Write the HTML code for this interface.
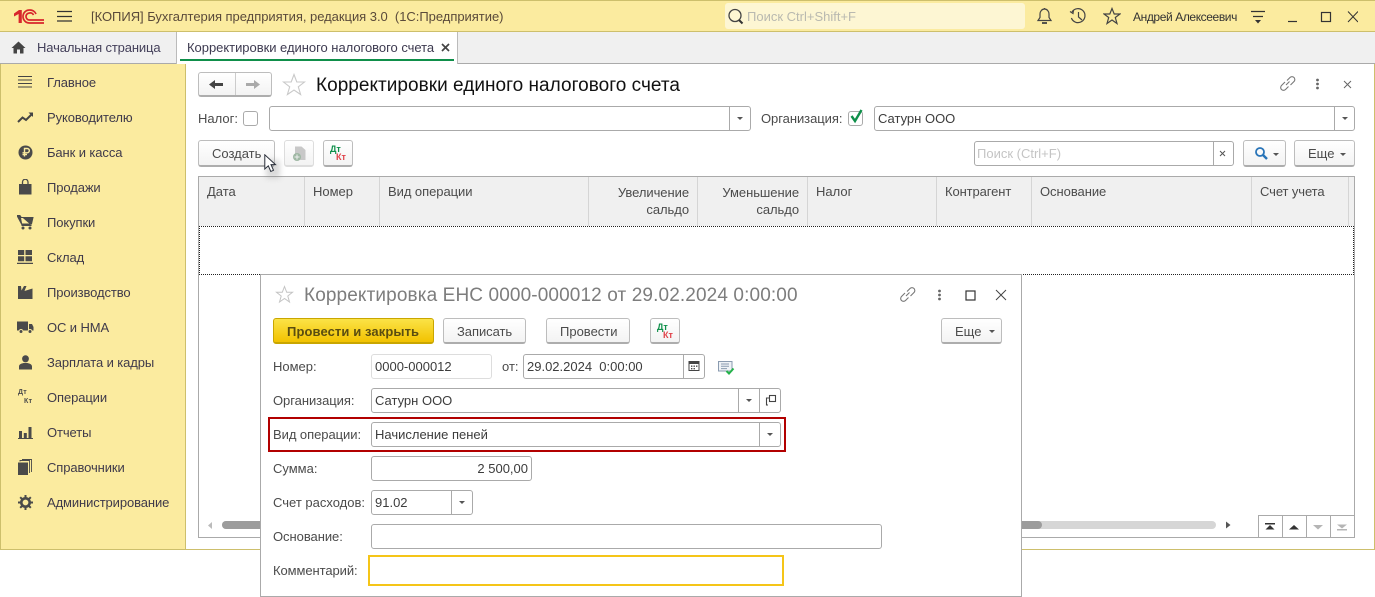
<!DOCTYPE html>
<html><head><meta charset="utf-8"><style>
html,body{margin:0;padding:0;background:#fff}
#p{position:relative;width:1375px;height:597px;overflow:hidden;font:13px/16px "Liberation Sans",Arial,sans-serif;color:#4b4b4b;background:#fff}
#p div,#p span,#p svg{position:absolute}
.t{white-space:nowrap;letter-spacing:0}
.m{color:#3f3a4a;left:47px;letter-spacing:-.1px}
.b{background:linear-gradient(#fff,#f3f3f3);border:1px solid #bdbdbd;border-bottom:2px solid #adadad;border-radius:3px;box-sizing:border-box}
.i{background:#fff;border:1px solid #aaa;border-radius:3px;box-sizing:border-box}
.d{width:1px;background:#aaa;top:0;bottom:0}
.a{width:0;height:0;border-left:3px solid transparent;border-right:3px solid transparent;border-top:3px solid #555}
.h{top:177px;height:49px;width:1px;background:#d5d5d5}
.c{color:#3c3c3c}
</style></head><body><div id="p">
<div style="left:0;top:0;width:1375px;height:32px;background:#fbeb9f;border-top:1px solid #cdbf6c;border-bottom:1px solid #cdbf6c;box-sizing:border-box"></div>
<svg style="left:14px;top:9px" width="30" height="15" viewBox="0 0 30 15"><path d="M0 4.5L5 1H7.8V14H4.6V5L0 7.5Z" fill="#d8262c"/><g fill="none" stroke="#d8262c" stroke-width="1.7"><path d="M22 5A6.5 6.5 0 0 0 15.5 1A6.5 6.5 0 0 0 15.5 14H30"/><path d="M19.5 6A3.5 3.5 0 0 0 15.5 4A3.5 3.5 0 0 0 15.5 11H30"/></g></svg>
<svg style="left:57px;top:10px" width="15" height="12"><path d="M0 1.5H15M0 6.5H15M0 11H15" stroke="#333" stroke-width="1.2"/></svg>
<span class="t" style="left:91px;top:9px;color:#5a4a3a;letter-spacing:-.03px">[КОПИЯ] Бухгалтерия предприятия, редакция 3.0&nbsp; (1С:Предприятие)</span>
<div style="left:725px;top:3px;width:300px;height:26px;background:#fdf6d3;border-radius:3px"></div>
<svg style="left:727px;top:8px" width="18" height="18"><circle cx="8" cy="7.5" r="6" fill="none" stroke="#444" stroke-width="1.3"/><path d="M12 12l3.5 3.5" stroke="#333" stroke-width="2"/></svg>
<span class="t" style="left:747px;top:9px;color:#b9b9b0">Поиск Ctrl+Shift+F</span>
<svg style="left:1036px;top:7px" width="17" height="18" fill="none" stroke="#444" stroke-width="1.2"><path d="M2 13.5H15L13 10.5V7A4.5 5 0 0 0 4 7V10.5Z"/><path d="M6 16H11" stroke-width="1.8"/><path d="M8.5 1v1.5"/></svg>
<svg style="left:1069px;top:7px" width="19" height="19" fill="none" stroke="#444" stroke-width="1.2"><path d="M3 5A7 7 0 1 1 2.4 11"/><path d="M1 4.5L4 6.5 4.5 3"/><path d="M9.5 5V10L13 13"/></svg>
<svg style="left:1103px;top:7px" width="18" height="18" fill="none" stroke="#444" stroke-width="1.2"><path d="M9 1.5L11.2 7H17L12.3 10.5 14 16.5 9 13 4 16.5 5.7 10.5 1 7H6.8Z"/></svg>
<span class="t" style="left:1133px;top:9px;font-size:12px;color:#333;letter-spacing:-.4px">Андрей Алексеевич</span>
<svg style="left:1250px;top:10px" width="16" height="15"><path d="M1 1.5H15M3 6.5H13" stroke="#333" stroke-width="1.2"/><path d="M5 10H11L8 13.5Z" fill="#333"/></svg>
<svg style="left:1288px;top:10px" width="70" height="13" fill="none" stroke="#333" stroke-width="1.2"><path d="M0 11.5H9"/><rect x="33.5" y="2.5" width="9" height="9"/><path d="M60 1.5L70 12M70 1.5L60 12" stroke-width="1"/></svg>

<div style="left:0;top:32px;width:1375px;height:32px;background:#f0f0f0;border-bottom:1px solid #aaa;box-sizing:border-box"></div>
<svg style="left:11px;top:41px" width="15" height="13"><path d="M7.5 0.5L14.5 7H12.5V12.5H9V8.5H6V12.5H2.5V7H.5Z" fill="#444"/></svg>
<span class="t" style="left:37px;top:40px;color:#44405a;letter-spacing:-.13px">Начальная страница</span>
<div style="left:176px;top:32px;width:282px;height:32px;background:#fff;border-left:1px solid #bbb;border-right:1px solid #bbb;box-sizing:border-box"></div>
<div style="left:180px;top:59px;width:274px;height:2px;background:#0f8f4a"></div>
<span class="t" style="left:187px;top:40px;color:#3d3a50;letter-spacing:-.03px">Корректировки единого налогового счета</span>
<svg style="left:441px;top:43px" width="9" height="9"><path d="M1 1L8 8M8 1L1 8" stroke="#444" stroke-width="1.7"/></svg>

<div style="left:0;top:64px;width:186px;height:486px;background:#fbeb9f;border-left:1px solid #cdbf6c;border-right:1px solid #cdbf6c;box-sizing:border-box"></div>
<div style="left:186px;top:549px;width:1189px;height:1px;background:#cdbf6c"></div>
<div style="left:0;top:549px;width:186px;height:1px;background:#cdbf6c"></div>
<div style="left:1374px;top:64px;width:1px;height:486px;background:#cdbf6c"></div>

<svg style="left:17px;top:75px" width="16" height="15" stroke="#444" stroke-width="1"><path d="M1 1.5H15M1 5H15M1 8.5H15M1 12H15"/></svg>
<span class="t m" style="top:75px">Главное</span>
<svg style="left:17px;top:111px" width="17" height="13" fill="none" stroke="#444" stroke-width="2"><path d="M1 11L5.5 6.5 9 9 15 3"/><path d="M11.5 1.5H16V6" fill="#444" stroke="none"/></svg>
<span class="t m" style="top:110px">Руководителю</span>
<svg style="left:18px;top:145px" width="15" height="15"><circle cx="7.5" cy="7.5" r="7" fill="#4a4a4a"/><path d="M6.5 11.5V3.5H9.2A2 2 0 0 1 9.2 7.8H4.5M4.5 9.6H9" fill="none" stroke="#fbeb9f" stroke-width="1.4"/></svg>
<span class="t m" style="top:145px">Банк и касса</span>
<svg style="left:19px;top:179px" width="13" height="16"><path d="M0 5H12.5V15.5H0Z" fill="#4a4a4a"/><path d="M3.5 6V3A2.7 2.7 0 0 1 9 3V6" fill="none" stroke="#4a4a4a" stroke-width="1.3"/></svg>
<span class="t m" style="top:180px">Продажи</span>
<svg style="left:17px;top:215px" width="17" height="15"><path d="M0 .5H3L4 2.5H16L14.5 9H4.5Z M3 .5L5 10.5H14.5" fill="#4a4a4a" stroke="#4a4a4a"/><circle cx="6" cy="13" r="1.5" fill="#4a4a4a"/><circle cx="13" cy="13" r="1.5" fill="#4a4a4a"/></svg>
<span class="t m" style="top:215px">Покупки</span>
<svg style="left:17px;top:250px" width="16" height="15" fill="#4a4a4a"><path d="M1 0h6.2v5H1zM8.5 0H15v5H8.5zM1 6.2h6.2v5H1zM8.5 6.2H15v5H8.5zM0 12.7h16V14H0z"/></svg>
<span class="t m" style="top:250px">Склад</span>
<svg style="left:18px;top:285px" width="15" height="15" fill="#4a4a4a"><path d="M0 14V1H3L3.5 5.5 6 1H8.5L6.5 6 14.5 3.5V14Z"/></svg>
<span class="t m" style="top:285px">Производство</span>
<svg style="left:17px;top:321px" width="17" height="13" fill="#4a4a4a"><path d="M0 .5H11V9.5H0Z"/><path d="M12 3H15L16.5 6V9.5H12Z"/><circle cx="4" cy="10.5" r="2" stroke="#fbeb9f"/><circle cx="13" cy="10.5" r="2" stroke="#fbeb9f"/></svg>
<span class="t m" style="top:320px">ОС и НМА</span>
<svg style="left:19px;top:355px" width="13" height="15" fill="#4a4a4a"><ellipse cx="6.5" cy="3.8" rx="3.4" ry="3.6"/><path d="M0 14.5V11.5C0 9 3 8.5 4.5 8H8.5C10 8.5 13 9 13 11.5V14.5Z"/></svg>
<span class="t m" style="top:355px">Зарплата и кадры</span>
<span style="left:18px;top:389px;font:bold 7px/8px 'Liberation Sans';color:#4a4a4a;letter-spacing:.3px">Дт</span>
<span style="left:24px;top:398px;font:bold 7px/8px 'Liberation Sans';color:#4a4a4a;letter-spacing:.3px">Кт</span>
<span class="t m" style="top:390px">Операции</span>
<svg style="left:18px;top:426px" width="15" height="13" fill="#4a4a4a"><path d="M1 5h3v7H1zM5.8 7h3v5h-3zM10.5 1h3v11h-3zM0 12h15v1H0z"/></svg>
<span class="t m" style="top:425px">Отчеты</span>
<svg style="left:18px;top:459px" width="15" height="16" fill="#4a4a4a"><path d="M0 3.5H10V16H0Z"/><path d="M2 2.5V1.5H11.5V14M4 .5H13.5V13" fill="none" stroke="#4a4a4a" stroke-width=".9"/></svg>
<span class="t m" style="top:460px">Справочники</span>
<svg style="left:18px;top:495px" width="15" height="15"><circle cx="7.5" cy="7.5" r="4.2" fill="none" stroke="#4a4a4a" stroke-width="2.6"/><path d="M7.5 0V15M0 7.5H15M2.2 2.2L12.8 12.8M12.8 2.2L2.2 12.8" stroke="#4a4a4a" stroke-width="2" stroke-dasharray="2.6 9.8"/></svg>
<span class="t m" style="top:495px">Администрирование</span>

<div class="b" style="left:198px;top:72px;width:74px;height:25px"></div>
<div style="left:235px;top:73px;width:1px;height:22px;background:#ccc"></div>
<svg style="left:209px;top:79px" width="16" height="11"><path d="M0 5.5L6 1V4H14V7H6V10Z" fill="#444"/></svg>
<svg style="left:245px;top:79px" width="16" height="11"><path d="M15 5.5L9 1V4H1V7H9V10Z" fill="#aaa"/></svg>
<svg style="left:282px;top:73px" width="24" height="24" fill="none" stroke="#c9c9c9" stroke-width="1.1"><path d="M12 1.5L14.8 9H22.5L16.3 13.8 18.6 21.5 12 17 5.4 21.5 7.7 13.8 1.5 9H9.2Z"/></svg>
<span class="t" style="left:316px;top:75px;font-size:19px;line-height:22px;color:#111;letter-spacing:.03px">Корректировки единого налогового счета</span>
<svg style="left:1279px;top:75px" width="17" height="17" fill="none" stroke="#777" stroke-width="1.1"><path d="M7 10L10.5 6.5"/><path d="M6 7L2.5 10.5A2.6 2.6 0 0 0 6.5 14.5L9.5 11.5"/><path d="M8 5.5L11 2.5A2.6 2.6 0 0 1 15 6.5L11.5 10"/></svg>
<svg style="left:1315px;top:78px" width="5" height="12" fill="#666"><circle cx="2.5" cy="2" r="1.4"/><circle cx="2.5" cy="6" r="1.4"/><circle cx="2.5" cy="10" r="1.4"/></svg>
<svg style="left:1343px;top:80px" width="9" height="9"><path d="M1 1L8 8M8 1L1 8" stroke="#666"/></svg>

<span class="t" style="left:198px;top:111px">Налог:</span>
<div class="i" style="left:243px;top:111px;width:15px;height:15px"></div>
<div class="i" style="left:269px;top:106px;width:482px;height:25px"><div class="d" style="right:20px"></div><div class="a" style="right:7px;top:10px"></div></div>
<span class="t" style="left:761px;top:111px;letter-spacing:-.05px">Организация:</span>
<div class="i" style="left:848px;top:111px;width:15px;height:15px"></div>
<svg style="left:849px;top:108px" width="15" height="16"><path d="M2.5 8L6 13 12.5 2" fill="none" stroke="#0f8f4a" stroke-width="2.4"/></svg>
<div class="i" style="left:874px;top:106px;width:481px;height:25px"><div class="d" style="right:19px"></div><div class="a" style="right:6px;top:10px"></div></div>
<span class="t c" style="left:878px;top:111px">Сатурн ООО</span>

<div class="b" style="left:198px;top:140px;width:77px;height:27px"></div>
<span class="t" style="left:212px;top:146px">Создать</span>
<div class="b" style="left:284px;top:140px;width:30px;height:27px;border-color:#ddd"></div>
<svg style="left:292px;top:146px" width="15" height="16"><path d="M3 .5H9.5L13.5 4V14H3Z" fill="#c8c8c8"/><circle cx="5" cy="11" r="4" fill="#9fb8a4"/><path d="M5 8.5V13.5M2.5 11H7.5" stroke="#eee"/></svg>
<div class="b" style="left:323px;top:140px;width:30px;height:27px"></div>
<span style="left:330px;top:145px;font:bold 9px/8px 'Liberation Sans';color:#0f8f4a">Дт</span>
<span style="left:336px;top:153px;font:bold 9px/8px 'Liberation Sans';color:#e0434a">Кт</span>

<div class="i" style="left:974px;top:141px;width:260px;height:25px"><div class="d" style="right:19px"></div></div>
<span class="t" style="left:977px;top:146px;color:#c4c4c4">Поиск (Ctrl+F)</span>
<svg style="left:1219px;top:150px" width="7" height="7"><path d="M1 1L6 6M6 1L1 6" stroke="#555"/></svg>
<div class="b" style="left:1243px;top:140px;width:43px;height:27px"></div>
<svg style="left:1254px;top:146px" width="15" height="15" fill="none" stroke="#2874b8" stroke-width="1.8"><circle cx="6" cy="6" r="4"/><path d="M9 9L13 13" stroke-width="2.4"/></svg>
<div class="a" style="left:1273px;top:153px"></div>
<div class="b" style="left:1294px;top:140px;width:61px;height:27px"></div>
<span class="t" style="left:1308px;top:146px">Еще</span>
<div class="a" style="left:1340px;top:153px"></div>

<div style="left:198px;top:176px;width:1157px;height:362px;border:1px solid #aaa;box-sizing:border-box"></div>
<div style="left:199px;top:177px;width:1155px;height:49px;background:#f0f0f0"></div>
<div class="h" style="left:304px"></div><div class="h" style="left:379px"></div><div class="h" style="left:588px"></div><div class="h" style="left:697px"></div><div class="h" style="left:807px"></div><div class="h" style="left:936px"></div><div class="h" style="left:1031px"></div><div class="h" style="left:1251px"></div><div class="h" style="left:1348px"></div>
<span class="t" style="left:207px;top:184px">Дата</span>
<span class="t" style="left:313px;top:184px">Номер</span>
<span class="t" style="left:388px;top:184px;letter-spacing:-.05px">Вид операции</span>
<span class="t" style="right:686px;top:184px;text-align:right;line-height:17px;letter-spacing:-.05px">Увеличение<br>сальдо</span>
<span class="t" style="right:576px;top:184px;text-align:right;line-height:17px;letter-spacing:-.05px">Уменьшение<br>сальдо</span>
<span class="t" style="left:816px;top:184px">Налог</span>
<span class="t" style="left:945px;top:184px;letter-spacing:-.1px">Контрагент</span>
<span class="t" style="left:1040px;top:184px;letter-spacing:-.05px">Основание</span>
<span class="t" style="left:1260px;top:184px;letter-spacing:-.1px">Счет учета</span>
<div style="left:199px;top:226px;width:1155px;height:49px;border:1px dotted #222;box-sizing:border-box"></div>

<svg style="left:207px;top:521px" width="8" height="9"><path d="M1 4.5L5 1V8Z" fill="#bbb"/></svg>
<div style="left:222px;top:521px;width:994px;height:8px;background:#d6d6d6;border-radius:4px"></div>
<div style="left:222px;top:521px;width:820px;height:8px;background:#9c9c9c;border-radius:4px"></div>
<svg style="left:1225px;top:521px" width="6" height="8"><path d="M1 .5L5.5 4 1 7.5Z" fill="#555"/></svg>
<div style="left:1258px;top:515px;width:97px;height:23px;border:1px solid #aaa;box-sizing:border-box"></div>
<div style="left:1282px;top:515px;width:1px;height:23px;background:#aaa"></div><div style="left:1306px;top:515px;width:1px;height:23px;background:#aaa"></div><div style="left:1330px;top:515px;width:1px;height:23px;background:#aaa"></div>
<svg style="left:1265px;top:522px" width="85" height="10"><path d="M0 1H10V2.5H0ZM5 3L9.5 7.5H.5Z" fill="#333"/><path d="M24 7.5L29 3 34 7.5Z" fill="#333"/><path d="M48 3H58L53 7.5Z" fill="#b5b5b5"/><path d="M72 2.5H82L77 6.5ZM72 7H82V8.5H72Z" fill="#b5b5b5"/></svg>

<div style="left:260px;top:274px;width:762px;height:323px;background:#fff;border:1px solid #aaa;box-sizing:border-box"></div>
<svg style="left:275px;top:285px" width="19" height="19" fill="none" stroke="#c4c4c4" stroke-width="1"><path d="M9.5 1.5L11.7 7.3H17.5L12.8 11 14.5 17 9.5 13.5 4.5 17 6.2 11 1.5 7.3H7.3Z"/></svg>
<span class="t" style="left:304px;top:285px;font-size:19px;line-height:22px;color:#7d7d7d;letter-spacing:.12px">Корректировка ЕНС 0000-000012 от 29.02.2024 0:00:00</span>
<svg style="left:899px;top:286px" width="17" height="17" fill="none" stroke="#777" stroke-width="1.1"><path d="M7 10L10.5 6.5"/><path d="M6 7L2.5 10.5A2.6 2.6 0 0 0 6.5 14.5L9.5 11.5"/><path d="M8 5.5L11 2.5A2.6 2.6 0 0 1 15 6.5L11.5 10"/></svg>
<svg style="left:937px;top:289px" width="5" height="12" fill="#666"><circle cx="2.5" cy="2" r="1.4"/><circle cx="2.5" cy="6" r="1.4"/><circle cx="2.5" cy="10" r="1.4"/></svg>
<svg style="left:965px;top:290px" width="11" height="11" fill="none" stroke="#333" stroke-width="1.2"><rect x="1" y="1" width="9" height="9"/></svg>
<svg style="left:995px;top:289px" width="12" height="12"><path d="M1 1L11 11M11 1L1 11" stroke="#444"/></svg>

<div class="b" style="left:273px;top:318px;width:161px;height:26px;background:linear-gradient(#fbe347,#f2c200);border-color:#c9a600"></div>
<span class="t" style="left:287px;top:324px;font-weight:bold;color:#5a4d10;letter-spacing:.1px">Провести и закрыть</span>
<div class="b" style="left:443px;top:318px;width:83px;height:26px"></div>
<span class="t" style="left:457px;top:324px;letter-spacing:-.05px">Записать</span>
<div class="b" style="left:546px;top:318px;width:84px;height:26px"></div>
<span class="t" style="left:560px;top:324px">Провести</span>
<div class="b" style="left:650px;top:318px;width:30px;height:26px"></div>
<span style="left:657px;top:323px;font:bold 9px/8px 'Liberation Sans';color:#0f8f4a">Дт</span>
<span style="left:663px;top:331px;font:bold 9px/8px 'Liberation Sans';color:#e0434a">Кт</span>
<div class="b" style="left:941px;top:318px;width:61px;height:26px"></div>
<span class="t" style="left:955px;top:324px">Еще</span>
<div class="a" style="left:989px;top:330px"></div>

<span class="t" style="left:273px;top:359px">Номер:</span>
<div class="i" style="left:371px;top:354px;width:121px;height:25px;border-color:#ddd"></div>
<span class="t c" style="left:375px;top:359px">0000-000012</span>
<span class="t" style="left:502px;top:359px">от:</span>
<div class="i" style="left:523px;top:354px;width:182px;height:25px"><div class="d" style="right:20px"></div></div>
<span class="t c" style="left:527px;top:359px">29.02.2024&nbsp; 0:00:00</span>
<svg style="left:688px;top:360px" width="12" height="11"><path d="M1 1.5H11V10.5H1Z" fill="none" stroke="#444"/><path d="M1 1H11V4H1Z" fill="#444"/><path d="M3 5.5h1.4v1.4H3zM5.5 5.5h1.4v1.4H5.5zM8 5.5h1.4v1.4H8zM3 8h1.4v1.4H3zM5.5 8h1.4v1.4H5.5z" fill="#444"/></svg>
<svg style="left:718px;top:361px" width="17" height="14"><path d="M.5.5H14V10H.5Z" fill="#eef2f6" stroke="#8a9bb0"/><path d="M3 3H11M3 5.3H11M3 7.6H9" stroke="#8a9bb0"/><path d="M8.5 10L11 12.5 15.5 7.5" fill="none" stroke="#24b24a" stroke-width="2"/></svg>

<span class="t" style="left:273px;top:393px;letter-spacing:-.05px">Организация:</span>
<div class="i" style="left:371px;top:388px;width:410px;height:25px"><div class="d" style="right:41px"></div><div class="d" style="right:20px"></div><div class="a" style="right:28px;top:10px"></div></div>
<span class="t c" style="left:375px;top:393px">Сатурн ООО</span>
<svg style="left:765px;top:394px" width="12" height="12" fill="none" stroke="#444" stroke-width="1.1"><rect x="4.5" y="1.5" width="6" height="6"/><path d="M4 4H1.5V11H3"/></svg>

<div style="left:268px;top:417px;width:518px;height:35px;border:2px solid #b20000;box-sizing:border-box"></div>
<span class="t" style="left:273px;top:427px;letter-spacing:-.05px">Вид операции:</span>
<div class="i" style="left:371px;top:422px;width:410px;height:25px"><div class="d" style="right:20px"></div><div class="a" style="right:7px;top:10px"></div></div>
<span class="t c" style="left:375px;top:427px">Начисление пеней</span>

<span class="t" style="left:273px;top:461px">Сумма:</span>
<div class="i" style="left:371px;top:456px;width:161px;height:25px"></div>
<span class="t c" style="right:847px;top:461px">2 500,00</span>

<span class="t" style="left:273px;top:495px">Счет расходов:</span>
<div class="i" style="left:371px;top:490px;width:102px;height:25px"><div class="d" style="right:20px"></div><div class="a" style="right:7px;top:10px"></div></div>
<span class="t c" style="left:375px;top:495px">91.02</span>

<span class="t" style="left:273px;top:529px;letter-spacing:-.05px">Основание:</span>
<div class="i" style="left:371px;top:524px;width:511px;height:25px"></div>

<span class="t" style="left:273px;top:563px;letter-spacing:-.08px">Комментарий:</span>
<div style="left:368px;top:555px;width:416px;height:31px;border:2px solid #f5c518;box-sizing:border-box;background:#fff"></div>

<div style="left:266px;top:160px;width:14px;height:18px;background:#777;opacity:.28;filter:blur(3px)"></div>
<svg style="left:264px;top:154px" width="16" height="20"><path d="M.8.8V15L4.3 11.8 6.8 17.5 9.5 16.3 7 10.6H11.5Z" fill="#fff" stroke="#2a2f3a"/></svg>
</div></body></html>
